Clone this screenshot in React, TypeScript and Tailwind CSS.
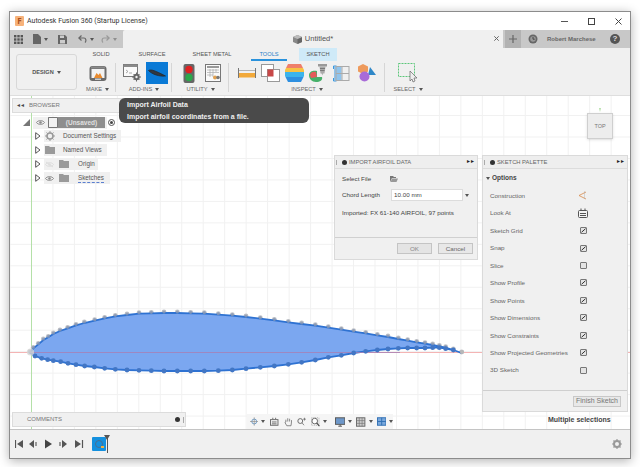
// App.tsx - Fusion 360 sketch window with imported airfoil
const sans = 'font-["Liberation_Sans",Arial,sans-serif]';

// airfoil points, read off the reference at page pixels
const upperA = [[90,125],[100,112],[115,100],[130,87],[145,79],[160,69],[180,60],[203,52],[228,43],[253,36],[284,29],[314,22],[346,16],[381,12],[417,8],[454,7],[492,6],[532,6],[572,7],[613,8],[655,11],[697,14]].map(([x, y]) => [x / 3, 310 + y / 3]);
const lowerA = [[105,138],[125,145],[143,149],[160,152],[182,155],[204,160],[228,164],[254,168],[283,171],[314,175],[346,178],[381,180],[417,181],[454,182],[492,183],[532,183],[572,183],[613,183],[655,182],[697,180]].map(([x, y]) => [x / 3, 310 + y / 3]);
const upperB = [[18,18],[61,23],[103,28],[145,34],[185,39],[226,44],[265,50],[304,56],[341,62],[377,67],[412,73],[444,78],[475,84],[503,89],[530,94],[555,98],[578,102],[598,106],[617,110],[640,117],[665,126]].map(([x, y]) => [240 + x / 3, 310 + y / 3]);
const lowerB = [[18,176],[61,172],[103,168],[145,163],[185,157],[226,150],[265,142],[304,136],[341,129],[377,124],[412,120],[444,117],[475,115],[503,114],[530,114],[555,114],[578,113],[598,113],[617,116],[640,120]].map(([x, y]) => [240 + x / 3, 310 + y / 3]);
const upper = [...upperA, ...upperB];
const lower = [...lowerA, ...lowerB];
// the blue line runs just under the grey dots on the top side
const outline = [...upper.map(([x, y]) => [x, y + 1]), ...[...lower].reverse()].map(([x, y]) => `${x},${y}`).join(' ');

const gridX = Array.from({ length: 30 }, (_, i) => 10 + i * 21.47);
const gridY = Array.from({ length: 16 }, (_, i) => 115.5 + i * 21.47);

const Canvas = () => (
  <svg className="absolute inset-0" width={620} height={333} viewBox="10 96 620 333">
    {gridX.map((x) => <line key={x} x1={x} x2={x} y1={96} y2={430} stroke="#f1f1f1" strokeWidth={1} />)}
    {gridY.map((y) => <line key={y} x1={10} x2={630} y1={y} y2={y} stroke="#f1f1f1" strokeWidth={1} />)}
    <line x1={31.5} x2={31.5} y1={96} y2={430} stroke="#b4e0a8" />
    <line x1={10} x2={630} y1={352.5} y2={352.5} stroke="#f4b4b4" />
    {upper.map(([x, y], i) => <circle key={i} cx={x} cy={y} r={2.4} fill="#c0c2c6" />)}
    <polygon points={outline} fill="#7ba7f0" stroke="#2e72d2" strokeWidth={1.8} />
    <line x1={31} x2={400} y1={352.5} y2={352.5} stroke="#a77fb4" strokeWidth={0.8} />
    {upper.map(([x, y], i) => <circle key={i} cx={x} cy={y} r={1.6} fill="#8a98b4" opacity={0.8} />)}
    {lower.map(([x, y], i) => <circle key={i} cx={x} cy={y} r={2.4} fill="#4276c4" />)}
    <circle cx={30.5} cy={352} r={3.6} fill="#d4d4d4" opacity={0.8} />
    <circle cx={462} cy={352} r={2} fill="#b8b8b8" />
  </svg>
);

const Caret = ({ className = '' }: { className?: string }) => (
  <span className={`inline-block w-0 h-0 border-l-[2px] border-r-[2px] border-t-[3px] border-l-transparent border-r-transparent border-t-[#555] ${className}`} />
);

const Group = ({ w, label, children, sep = true }: { w: string; label: string; children?: React.ReactNode; sep?: boolean }) => (
  <div className={`${w} flex flex-col items-center relative`}>
    <div className="h-[24px] flex items-center gap-[5px]">{children}</div>
    <div className="h-[9px] flex items-center gap-[3px] text-[5.7px] leading-none text-[#666] whitespace-nowrap">
      {label}
      <Caret />
    </div>
    {sep && <div className="absolute right-0 top-[2px] h-[29px] w-px bg-[#d6d6d6]" />}
  </div>
);

const PrintIcon = () => (
  <svg width={18} height={17} viewBox="0 0 18 17">
    <rect x={0.5} y={1} width={17} height={15} rx={3} fill="#6b6b6b" />
    <rect x={2.5} y={4} width={13} height={9} fill="#f2f2f2" />
    <rect x={2} y={1.5} width={14} height={2} fill="#8a8a8a" />
    <path d="M5 13l2.5-5 2 2 1.5-2 2.5 5z" fill="#e88a2e" />
    <rect x={6} y={13.5} width={6} height={1.5} fill="#ccc" />
  </svg>
);

const ScriptIcon = () => (
  <svg width={19} height={18} viewBox="0 0 19 18">
    <rect x={0.5} y={0.5} width={14} height={12} fill="#fafafa" stroke="#777" />
    <rect x={0.5} y={0.5} width={14} height={2.5} fill="#8a8a8a" />
    <path d="M3 6l2 1.5-2 1.5M6 9h3" stroke="#888" strokeWidth={0.7} fill="none" />
    <circle cx={13.5} cy={13} r={3.2} fill="#666" />
    <path d="M13.5 8.5v9M9 13h9M10.5 10l6 6M16.5 10l-6 6" stroke="#666" strokeWidth={1} />
    <circle cx={13.5} cy={13} r={1.2} fill="#f0f0f0" />
  </svg>
);

const AirfoilAddin = () => (
  <div className="w-[22.5px] h-[22px] bg-[#0a7ad6] flex items-center justify-center">
    <svg width={18} height={10} viewBox="0 0 18 10">
      <path d="M0.5 2.5C3 1 7 2.5 17.5 8 12 8.8 4 6.5 0.5 2.5z" fill="#33383f" stroke="#22262b" strokeWidth={0.7} />
    </svg>
  </div>
);

const LightIcon = () => (
  <svg width={12} height={19} viewBox="0 0 12 19">
    <rect x={0.5} y={0} width={11} height={19} rx={2} fill="#666" />
    <circle cx={6} cy={5.5} r={3.7} fill="#e02020" />
    <circle cx={6} cy={13.5} r={3.7} fill="#2aa84a" />
  </svg>
);

const TableIcon = () => (
  <svg width={16} height={18} viewBox="0 0 16 18">
    <rect x={0.5} y={0.5} width={15} height={17} fill="#fafafa" stroke="#777" />
    <rect x={2} y={2} width={12} height={2} fill="#999" />
    <path d="M2 6h12M2 8.5h12M2 11h6M5 5v8M8 5v8M11 5v3" stroke="#aaa" strokeWidth={0.7} />
    <circle cx={10} cy={13.5} r={2} fill="#e0a050" />
    <circle cx={13} cy={13.5} r={1.8} fill="#777" />
  </svg>
);

const MeasureIcon = () => (
  <svg width={18} height={10} viewBox="0 0 18 10">
    <path d="M0.5 0v10M17.5 0v10" stroke="#777" />
    <rect x={1} y={5} width={16} height={4.5} fill="#f2a93a" />
    <path d="M1 2.5h16" stroke="#999" strokeWidth={0.7} />
  </svg>
);

const InterferenceIcon = () => (
  <svg width={19} height={18} viewBox="0 0 19 18">
    <rect x={0.5} y={0.5} width={12} height={12} fill="#fff" stroke="#999" />
    <rect x={6.5} y={5.5} width={12} height={12} fill="#fff" stroke="#999" />
    <rect x={6.5} y={5.5} width={6} height={7} fill="#c84848" />
  </svg>
);

const ZebraIcon = () => (
  <svg width={19} height={18} viewBox="0 0 19 18">
    <defs>
      <clipPath id="zebra"><path d="M3 0h13l3 6v6l-3 6H3l-3-6V6z" /></clipPath>
    </defs>
    <g clipPath="url(#zebra)">
      <rect width={19} height={4} fill="#ef7f6a" />
      <rect y={4} width={19} height={4} fill="#f6c244" />
      <rect y={8} width={19} height={5} fill="#3bb4ec" />
      <rect y={13} width={19} height={5} fill="#2e8fe0" />
    </g>
  </svg>
);

const CurvatureIcon = () => (
  <svg width={18} height={18} viewBox="0 0 18 18">
    <path d="M0 11c0-4 5-5 8-4v6h5c1 3-2 5-6 5s-7-3-7-7z" fill="#46b06a" />
    <path d="M1 11c0-3 4-4 6-3l1 5-6 1z" fill="#e65a5a" />
    <rect x={9} y={0} width={9} height={2.5} fill="#999" />
    <path d="M10.5 2.5h6l-1 7h-1.5l-.5 2-1-2h-1z" fill="#aaa" />
    <path d="M11 4.5h5M11 6.5h4.5" stroke="#666" strokeWidth={0.7} />
  </svg>
);

const SectionIcon = () => (
  <svg width={17} height={17} viewBox="0 0 17 17">
    <rect x={1} y={1.5} width={7.5} height={14} fill="#90c4ec" />
    <path d="M0.5 4V1h3M0.5 13v3h3" stroke="#3a98e0" fill="none" />
    <rect x={3} y={1.5} width={13} height={14} fill="none" stroke="#aaa" />
    <path d="M9 1.5v14M3 8.5h13" stroke="#aaa" />
  </svg>
);

const ColorIcon = () => (
  <svg width={18} height={18} viewBox="0 0 18 18">
    <path d="M5 0l5 2.5v5l-5 2.5-5-2.5v-5z" fill="#ee9a5c" />
    <path d="M12 3l6 8h-8z" fill="#2f88c8" />
    <circle cx={6.5} cy={12.5} r={5} fill="#a86bd8" />
  </svg>
);

const SelectIcon = () => (
  <svg width={20} height={20} viewBox="0 0 20 20">
    <rect x={0.5} y={0.5} width={16} height={13} fill="none" stroke="#5cc77a" strokeDasharray="2 1" />
    <path d="M12 8v10l2-2 1 3 2-1-1-3h3z" fill="#eee" stroke="#666" strokeWidth={0.7} />
  </svg>
);

const Eye = ({ off = false }: { off?: boolean }) => (
  <svg width={9} height={7} viewBox="0 0 9 7">
    <path d="M0.5 3.5C2 1 7 1 8.5 3.5 7 6 2 6 0.5 3.5z" fill="none" stroke={off ? '#ddd' : '#888'} />
    <circle cx={4.5} cy={3.5} r={1.3} fill={off ? '#ddd' : '#888'} />
    {off && <path d="M1 1l7 5" stroke="#ddd" />}
  </svg>
);

const Folder = () => (
  <svg width={10} height={8} viewBox="0 0 10 8">
    <path d="M0 0h4l1 1h5v7H0z" fill="#9a9a9a" />
  </svg>
);

const Arrow = () => (
  <svg width={6} height={8} viewBox="0 0 6 8" className="shrink-0">
    <path d="M0.7 0.7L5 4 0.7 7.3z" fill="#fff" stroke="#555" />
  </svg>
);

const TreeRow = ({ children, w }: { children: React.ReactNode; w: string }) => (
  <div className="flex items-center h-[14px] ml-[23px]">
    <Arrow />
    <div className={`${w} ml-[3px] h-[12px] bg-[#f0f0f0] flex items-center text-[6.3px] text-[#555] whitespace-nowrap`}>{children}</div>
  </div>
);

const Browser = () => (
  <div className={`absolute left-[2px] top-[2px] w-[120px] ${sans}`}>
    <div className="h-[15px] bg-[#f0f0f0] border border-[#dcdcdc] flex items-center text-[6px] text-[#777]">
      <span className="ml-[3px] text-[#444] text-[5px] tracking-[-1px]">◄◄</span>
      <span className="ml-[5px]">BROWSER</span>
    </div>
    <div className="flex items-center h-[13px] mt-[3px] ml-[11px]">
      <div className="w-0 h-0 border-l-[7px] border-b-[7px] border-l-transparent border-b-[#777]" />
      <div className="ml-[3px] w-[74px] h-[12px] bg-[#f0f0f0] flex items-center pl-[3px] pr-[2px]">
        <Eye />
        <div className="ml-[3px] flex-1 h-[11px] bg-[#8e8e8e] flex items-center">
          <div className="w-[10px] h-[11px] bg-[#f2f2f2] border border-[#777] rounded-[1px]" />
          <span className="flex-1 text-center text-[6.5px] font-bold text-[#e0e0e0]">(Unsaved)</span>
        </div>
      </div>
      <div className="ml-[1px] w-[7px] h-[7px] rounded-full border border-[#555] flex items-center justify-center">
        <div className="w-[3px] h-[3px] rounded-full bg-[#444]" />
      </div>
    </div>
    <TreeRow w="w-[77px]">
      <svg width={10} height={10} viewBox="0 0 10 10" className="ml-[1px]">
        <circle cx={5} cy={5} r={3} fill="none" stroke="#999" strokeWidth={1.6} />
        <path d="M5 0v2M5 8v2M0 5h2M8 5h2M1.5 1.5l1.5 1.5M7 7l1.5 1.5M8.5 1.5L7 3M3 7L1.5 8.5" stroke="#999" />
      </svg>
      <span className="ml-[8px]">Document Settings</span>
    </TreeRow>
    <TreeRow w="w-[63px]">
      <span className="ml-[1px] flex"><Folder /></span>
      <span className="ml-[8px]">Named Views</span>
    </TreeRow>
    <TreeRow w="w-[54px]">
      <span className="ml-[1px] flex"><Eye off /></span>
      <span className="ml-[5px] flex"><Folder /></span>
      <span className="ml-[9px]">Origin</span>
    </TreeRow>
    <TreeRow w="w-[66px]">
      <span className="ml-[1px] flex"><Eye /></span>
      <span className="ml-[5px] flex"><Folder /></span>
      <span className="ml-[9px] border-b border-dashed border-[#5a7fd0] leading-[8px]">Sketches</span>
    </TreeRow>
  </div>
);

const Checkbox = ({ on = true }: { on?: boolean }) => (
  <div className="w-[7px] h-[7px] rounded-[1px] border border-[#777] bg-[#e4e4e4] flex items-center justify-center">
    {on && (
      <svg width={5} height={5} viewBox="0 0 5 5">
        <path d="M0.5 4.3L4.5 0.7" stroke="#333" strokeWidth={1} />
      </svg>
    )}
  </div>
);

const PanelHeader = ({ title }: { title: string }) => (
  <div className="h-[13px] bg-[#eeeeee] border-b border-[#dcdcdc] flex items-center text-[5.8px] text-[#666]">
    <span className="ml-[1px] w-[1px] h-[5px] bg-[#aaa]" />
    <span className="ml-[5px] w-[5px] h-[5px] rounded-full bg-[#333]" />
    <span className="ml-[2px] flex-1">{title}</span>
    <span className="mr-[3px] text-[5px] tracking-[-1px] text-[#222]">►►</span>
  </div>
);

const ImportPanel = () => (
  <div className={`absolute left-[324px] top-[59px] w-[144px] h-[105px] bg-[#f0f0f0] border border-[#dadada] flex flex-col text-[6.25px] text-[#444] ${sans}`}>
    <PanelHeader title="IMPORT AIRFOIL DATA" />
    <div className="flex-1 pl-[7px]">
      <div className="flex items-center h-[11px] mt-[4px]">
        <span className="w-[48px]">Select File</span>
        <svg width={8} height={6} viewBox="0 0 8 6">
          <path d="M0 0h3l1 1h2v1H2L0 6z" fill="#777" />
          <path d="M2 2.5h6L6.5 6H0.5z" fill="#999" />
        </svg>
      </div>
      <div className="flex items-center h-[12px] mt-[5px]">
        <span className="w-[49px]">Chord Length</span>
        <div className="w-[72px] h-[12px] bg-white border border-[#dcdcdc] flex items-center pl-[2px]">10.00 mm</div>
        <Caret className="ml-[2px]" />
      </div>
      <div className="mt-[7px] leading-[9px]">Imported: FX 61-140 AIRFOIL, 97 points</div>
    </div>
    <div className="h-[22px] border-t border-[#d0d0d0] flex items-center justify-end gap-[6px] pr-[4px]">
      <div className="w-[35px] h-[11px] bg-[#e4e4e4] border border-[#c4c4c4] flex items-center justify-center text-[#888]">OK</div>
      <div className="w-[35px] h-[11px] bg-[#e8e8e8] border border-[#c4c4c4] flex items-center justify-center text-[#666]">Cancel</div>
    </div>
  </div>
);

const paletteRows: { label: string; on?: boolean }[] = [
  { label: 'Sketch Grid', on: true },
  { label: 'Snap', on: true },
  { label: 'Slice', on: false },
  { label: 'Show Profile', on: true },
  { label: 'Show Points', on: true },
  { label: 'Show Dimensions', on: true },
  { label: 'Show Constraints', on: true },
  { label: 'Show Projected Geometries', on: true },
  { label: '3D Sketch', on: false },
];

const PaletteRow = ({ label, children }: { label: string; children: React.ReactNode }) => (
  <div className="h-[17.45px] flex items-center">
    <span className="w-[87px] whitespace-nowrap">{label}</span>
    <span className="w-[12px] flex justify-center">{children}</span>
  </div>
);

const SketchPalette = () => (
  <div className={`absolute left-[472px] top-[59px] w-[146px] h-[257px] bg-[#f0f0f0] border border-[#dadada] flex flex-col text-[6.25px] text-[#555] ${sans}`}>
    <PanelHeader title="SKETCH PALETTE" />
    <div className="flex-1">
      <div className="h-[14px] mt-[2px] pl-[3px] flex items-center gap-[2px] font-bold text-[6.5px] text-[#444]">
        <Caret />
        Options
      </div>
      <div className="pl-[7px] mt-[2px] text-[#666]">
        <PaletteRow label="Construction">
          <svg width={9} height={9} viewBox="0 0 9 9">
            <path d="M0 4.5L7 1M0 4.5L7 8" stroke="#d98a4a" strokeWidth={0.8} fill="none" />
            <path d="M5.5 0.5v8" stroke="#aaa" strokeDasharray="1 1" strokeWidth={0.8} />
          </svg>
        </PaletteRow>
        <PaletteRow label="Look At">
          <svg width={10} height={10} viewBox="0 0 10 10">
            <rect x={0.5} y={2.5} width={9} height={7} rx={1} fill="#f4f4f4" stroke="#555" />
            <path d="M2 5.5h6M2 7.5h6" stroke="#555" />
            <path d="M3 2.5V0.5M7 2.5V0.5" stroke="#555" />
          </svg>
        </PaletteRow>
        {paletteRows.map((r) => (
          <PaletteRow key={r.label} label={r.label}>
            <Checkbox on={r.on} />
          </PaletteRow>
        ))}
      </div>
    </div>
    <div className="h-[21px] border-t border-[#cfcfcf] flex items-center justify-end pr-[6px]">
      <div className="w-[48px] h-[11px] bg-[#e8e8e8] border border-[#c8c8c8] flex items-center justify-center text-[7px] text-[#777]">Finish Sketch</div>
    </div>
  </div>
);

const ViewCube = () => (
  <div className={`absolute left-[577px] top-[12px] flex flex-col items-center ${sans}`}>
    <div className="w-0 h-0 border-l-[1.5px] border-r-[1.5px] border-t-[4px] border-l-transparent border-r-transparent border-t-[#b4e0a8]" />
    <div className="mt-[1px] w-[26px] h-[26px] bg-[#ededed] border border-[#cfcfcf] flex items-center justify-center text-[5.5px] text-[#777] shadow-sm">TOP</div>
  </div>
);

const NavBar = () => (
  <div className="absolute left-[237px] top-[318px] w-[146px] h-[15px] bg-[#f5f5f5] flex items-center pl-[3px] gap-[3px]">
    <svg width={9} height={9} viewBox="0 0 9 9">
      <circle cx={4.5} cy={4.5} r={2.6} fill="none" stroke="#6a9ac8" />
      <path d="M4.5 0v9M0 4.5h9" stroke="#888" strokeWidth={0.7} />
    </svg>
    <Caret />
    <svg width={9} height={9} viewBox="0 0 9 9" className="ml-[2px]">
      <rect x={0.5} y={2.5} width={8} height={6} fill="none" stroke="#666" />
      <path d="M2 5h5M2 7h5M3 2V0.5M6 2V0.5" stroke="#666" />
    </svg>
    <svg width={10} height={10} viewBox="0 0 10 10" className="ml-[2px]">
      <path d="M2 5V2.5M4 4.5V1M6 4.5V1.5M8 5V3M2 5L1 5.5 3 9h4.5L8 5" fill="none" stroke="#666" strokeWidth={0.8} />
    </svg>
    <svg width={10} height={9} viewBox="0 0 10 9" className="ml-[1px]">
      <circle cx={3.5} cy={4} r={2.6} fill="none" stroke="#666" />
      <path d="M5.5 6l2 2.5M8 0.5v3M6.5 2h3" stroke="#666" strokeWidth={0.8} />
    </svg>
    <svg width={10} height={10} viewBox="0 0 10 10" className="ml-[1px]">
      <rect x={0.5} y={0.5} width={8} height={8} fill="none" stroke="#aaa" strokeDasharray="1 1" />
      <circle cx={4} cy={4} r={3} fill="#fff" stroke="#666" />
      <path d="M6 6l3 3.5" stroke="#444" strokeWidth={1.2} />
    </svg>
    <Caret />
    <svg width={11} height={10} viewBox="0 0 11 10" className="ml-[5px]">
      <rect x={0.5} y={0.5} width={10} height={7} fill="#6d97c9" stroke="#555" />
      <path d="M3.5 9.5h4M5.5 7.5v2" stroke="#555" />
    </svg>
    <Caret />
    <svg width={10} height={10} viewBox="0 0 10 10" className="ml-[1px]">
      <rect x={0.5} y={0.5} width={9} height={9} fill="#ccc" stroke="#666" />
      <path d="M3.5 0.5v9M6.5 0.5v9M0.5 3.5h9M0.5 6.5h9" stroke="#777" strokeWidth={0.7} />
    </svg>
    <Caret />
    <svg width={10} height={9} viewBox="0 0 10 9" className="ml-[1px]">
      <rect x={0.5} y={0.5} width={9} height={8} fill="#7aa8dc" stroke="#2f6fb4" />
      <path d="M5 0.5v8M0.5 4.5h9" stroke="#2f6fb4" />
    </svg>
    <Caret />
  </div>
);

const TitleBar = () => (
  <div className="h-[18px] bg-white flex items-center shrink-0">
    <div className="ml-[5px] w-[9px] h-[10px] bg-[#f7b27a] rounded-[1px] flex items-center justify-center text-[8px] font-bold leading-none text-[#a8501c]">F</div>
    <span className={'ml-[3px] flex-1 text-[7px] leading-none text-[#333] font-["Roboto",sans-serif]'}>Autodesk Fusion 360 (Startup License)</span>
    <svg width={7} height={1} viewBox="0 0 7 1" className="mr-[20px]"><rect width={7} height={1} fill="#555" /></svg>
    <svg width={7} height={7} viewBox="0 0 7 7" className="mr-[20px]"><rect x={0.5} y={0.5} width={6} height={6} fill="none" stroke="#444" /></svg>
    <svg width={7} height={7} viewBox="0 0 7 7" className="mr-[8px]"><path d="M0.5 0.5l6 6M6.5 0.5l-6 6" stroke="#444" /></svg>
  </div>
);

const TabBar = () => (
  <div className={`h-[18px] bg-[#c8c8c8] flex shrink-0 ${sans}`}>
    <div className="w-[113px] flex items-center pl-[4px]">
      <svg width={9} height={9} viewBox="0 0 9 9">
        {[0, 3.3, 6.6].map((x) => [0, 3.3, 6.6].map((y) => <rect key={`${x}-${y}`} x={x} y={y} width={2.4} height={2.4} fill="#555" />))}
      </svg>
      <svg width={8} height={10} viewBox="0 0 8 10" className="ml-[10px]"><path d="M0 0h5l3 3v7H0z" fill="#666" /></svg>
      <Caret className="ml-[3px]" />
      <svg width={9} height={9} viewBox="0 0 9 9" className="ml-[10px]">
        <path d="M0 0h7l2 2v7H0z" fill="#666" />
        <rect x={2} y={0.5} width={4} height={2.5} fill="#ccc" />
        <rect x={2} y={5} width={5} height={3.5} fill="#ccc" />
      </svg>
      <svg width={9} height={8} viewBox="0 0 9 8" className="ml-[11px]"><path d="M3.5 0.5L0.8 3l2.7 2.5M1 3h5c2 0 2.5 3 1 4.5" fill="none" stroke="#666" strokeWidth={1.2} /></svg>
      <Caret className="ml-[3px]" />
      <svg width={9} height={8} viewBox="0 0 9 8" className="ml-[7px]"><path d="M5.5 0.5L8.2 3 5.5 5.5M8 3H3C1 3 .5 6 2 7.5" fill="none" stroke="#999" strokeWidth={1.2} /></svg>
      <Caret className="ml-[3px] opacity-50" />
    </div>
    <div className="w-[380px] bg-[#f0f0f0] rounded-tl-[2px] flex items-center justify-center relative text-[7.5px] text-[#555]">
      <svg width={9} height={9} viewBox="0 0 9 9" className="mr-[3px]">
        <path d="M4.5 0L9 2v5L4.5 9 0 7V2z" fill="#888" />
        <path d="M4.5 4L9 2v5L4.5 9z" fill="#666" />
        <path d="M4.5 4L0 2l4.5-2L9 2z" fill="#bbb" />
      </svg>
      Untitled*
      <svg width={5} height={5} viewBox="0 0 5 5" className="absolute right-[4px] top-[6px]"><path d="M0.3 0.3l4.4 4.4M4.7 0.3L0.3 4.7" stroke="#666" /></svg>
    </div>
    <div className="ml-[2px] w-[16px] bg-[#b2b2b2] flex items-center justify-center">
      <svg width={8} height={8} viewBox="0 0 8 8"><path d="M4 0v8M0 4h8" stroke="#666" strokeWidth={1.2} /></svg>
    </div>
    <svg width={10} height={10} viewBox="0 0 10 10" className="ml-[7px] self-center">
      <circle cx={5} cy={5} r={4.5} fill="#666" />
      <circle cx={5} cy={5} r={2.8} fill="#999" />
      <path d="M5 3v2.2h1.7" stroke="#444" fill="none" />
    </svg>
    <span className="ml-[9px] self-center w-[63px] text-[6px] font-bold text-[#666]">Robert Marchese</span>
    <div className="self-center w-[10px] h-[10px] rounded-full bg-[#555] text-[#ddd] text-[8px] font-bold leading-[10px] text-center">?</div>
  </div>
);

const Ribbon = () => (
  <div className={`h-[48px] bg-[#f0f0f0] border-b border-[#dedede] flex shrink-0 ${sans}`}>
    <div className="w-[69px] pl-[6px] pt-[6px]">
      <div className="w-[61px] h-[36px] border border-[#d8d8d8] rounded-[3px] flex items-center justify-center gap-[3px] text-[5.6px] font-bold text-[#555]">
        DESIGN
        <Caret />
      </div>
    </div>
    <div className="flex flex-col">
      <div className="h-[13px] flex text-[5.7px] text-[#555] leading-[13px]">
        <div className="w-[44px] text-center">SOLID</div>
        <div className="ml-[4px] w-[50px] text-center">SURFACE</div>
        <div className="w-[70px] text-center">SHEET METAL</div>
        <div className="ml-[4px] w-[36px] text-center text-[#2a82c8] border-b-2 border-[#2a92dc] h-[13px]">TOOLS</div>
        <div className="ml-[12px] w-[38px] text-center bg-[#cfeaf8]">SKETCH</div>
      </div>
      <div className="flex">
        <Group w="w-[37px]" label="MAKE"><PrintIcon /></Group>
        <Group w="w-[56px]" label="ADD-INS"><span className="ml-[3px] flex"><ScriptIcon /></span><span className="ml-[-1px]"><AirfoilAddin /></span></Group>
        <Group w="w-[57px]" label="UTILITY"><span className="ml-[2px] flex"><LightIcon /></span><span className="ml-[5px] flex"><TableIcon /></span></Group>
        <Group w="w-[156px]" label="INSPECT">
          <MeasureIcon /><InterferenceIcon /><ZebraIcon /><CurvatureIcon /><span className="ml-[1px] flex"><SectionIcon /></span><span className="ml-[3px] flex"><ColorIcon /></span>
        </Group>
        <Group w="w-[46px]" label="SELECT" sep={false}><SelectIcon /></Group>
      </div>
    </div>
  </div>
);

const Timeline = () => (
  <div className="flex-1 bg-[#f0f0f0] border-t border-[#c4c4c4] flex items-center relative">
    <svg width={80} height={10} viewBox="0 0 80 10" className="ml-[5px]">
      <path d="M0.5 1v8" stroke="#555" strokeWidth={1.2} /><path d="M8 1v8L2 5z" fill="#555" />
      <path d="M14 5l5-4v8z" fill="#555" /><path d="M20 3h2v4h-2z" fill="#999" />
      <path d="M30 0.5l7 4.5-7 4.5z" fill="#444" />
      <path d="M44 3h2v4h-2z" fill="#999" /><path d="M52 5l-5-4v8z" fill="#555" />
      <path d="M60 1v8l6-4z" fill="#555" /><path d="M67.5 1v8" stroke="#555" strokeWidth={1.2} />
    </svg>
    <div className="ml-[-3px] relative w-[14px] h-[14px] bg-[#1490de] rounded-[1px] flex items-center justify-center">
      <div className="w-[8px] h-[8px] rounded-full border border-[#4a6f90]" />
      <div className="absolute right-[2px] bottom-[3px] w-[3px] h-[2px] bg-[#f0b040]" />
      <div className="absolute right-[-4px] top-[-2px] w-0 h-0 border-l-[3px] border-r-[3px] border-t-[5px] border-l-transparent border-r-transparent border-t-[#555]" />
      <div className="absolute right-[-1.5px] top-[-2px] w-px h-[18px] bg-[#555]" />
    </div>
    <svg width={10} height={10} viewBox="0 0 10 10" className="ml-auto mr-[8px]">
      <circle cx={5} cy={5} r={3} fill="none" stroke="#999" strokeWidth={2} />
      <path d="M5 0v2M5 8v2M0 5h2M8 5h2M1.5 1.5l1.5 1.5M7 7l1.5 1.5M8.5 1.5L7 3M3 7L1.5 8.5" stroke="#999" strokeWidth={1.2} />
    </svg>
  </div>
);

export default function App() {
  return (
    <div className="w-[640px] h-[467px] bg-white pt-[11px] pl-[9px] overflow-hidden">
      <div className="w-[622px] h-[448px] border border-[#8c8c8c] bg-white shadow-[0_2px_10px_rgba(0,0,0,0.3)] flex flex-col">
        <TitleBar />
        <TabBar />
        <Ribbon />
        <div className={`h-[333px] relative bg-white shrink-0 overflow-hidden ${sans}`}>
          <Canvas />
          <Browser />
          <ViewCube />
          <ImportPanel />
          <SketchPalette />
          <div className="absolute left-[109px] top-[2px] w-[190px] h-[25px] rounded-[6px] bg-[#4a4a4a] text-[7px] font-bold text-[#eeeeee] pl-[8px] pt-[1px] leading-[12px] z-10">
            <div>Import Airfoil Data</div>
            <div>Import airfoil coordinates from a file.</div>
          </div>
          <div className="absolute left-[2px] top-[316px] w-[174px] h-[15px] bg-[#f0f0f0] border border-[#dcdcdc] flex items-center text-[6px] text-[#777]">
            <span className="ml-[14px] flex-1">COMMENTS</span>
            <span className="mr-[3px] w-[5px] h-[5px] rounded-full bg-[#333]" />
            <span className="w-px h-[6px] bg-[#aaa] mr-[1px]" />
          </div>
          <NavBar />
          <div className="absolute left-[538px] top-[319px] text-[7px] font-bold text-[#444] leading-[9px]">Multiple selections</div>
        </div>
        <Timeline />
      </div>
    </div>
  );
}
